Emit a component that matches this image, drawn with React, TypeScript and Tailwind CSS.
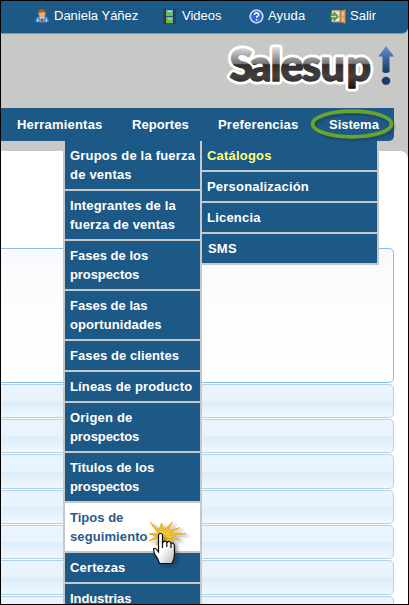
import React from "react";

type Line = { text: string; tracking: string };

const catalog: Line[][] = [
  [{ text: "Grupos de la fuerza", tracking: "tracking-[0.2px]" }, { text: "de ventas", tracking: "tracking-[0.2px]" }],
  [{ text: "Integrantes de la", tracking: "tracking-[0.15px]" }, { text: "fuerza de ventas", tracking: "tracking-[0.2px]" }],
  [{ text: "Fases de los", tracking: "tracking-[0.02px]" }, { text: "prospectos", tracking: "tracking-[-0.08px]" }],
  [{ text: "Fases de las", tracking: "tracking-[0.02px]" }, { text: "oportunidades", tracking: "tracking-[0.1px]" }],
  [{ text: "Fases de clientes", tracking: "tracking-[0.08px]" }],
  [{ text: "Líneas de producto", tracking: "tracking-[0.13px]" }],
  [{ text: "Origen de", tracking: "tracking-[0.2px]" }, { text: "prospectos", tracking: "tracking-[-0.08px]" }],
  [{ text: "Titulos de los", tracking: "tracking-[0.05px]" }, { text: "prospectos", tracking: "tracking-[-0.08px]" }],
  [{ text: "Tipos de", tracking: "tracking-[0.02px]" }, { text: "seguimiento", tracking: "tracking-[0.1px]" }],
  [{ text: "Certezas", tracking: "tracking-[0.15px]" }],
  [{ text: "Industrias", tracking: "tracking-[-0.08px]" }],
];

const system = ["Catálogos", "Personalización", "Licencia", "SMS"];

const rowHeights = ["h-[34px]", "h-[34px]", "h-[35px]", "h-[34px]", "h-[34px]", "h-[35px]", "h-[34px]"];

function UserIcon() {
  return (
    <svg className="shrink-0" width="14" height="14" viewBox="0 0 14 14">
      <path d="M.5 12.5Q.5 8 4 7.5H10Q13.500 8 13.500 12.500Q7 14.500 .5 12.500Z" fill="#639bd0" stroke="#397ab8" strokeWidth=".6" />
      <path d="M4.500 7.500L7 12L9.500 7.500Z" fill="#eee" />
      <path d="M6.400 8.500h1.200L8 12L7 13L6 12Z" fill="#c33a32" />
      <circle cx="7" cy="4.600" r="3.400" fill="#e9ad78" />
      <path d="M3 5Q2.500 .3 7 .2Q11.500 .3 11 5L9.800 3.600L6 3.200L4.200 4Z" fill="#a35f2c" />
      <path d="M2.500 10.500v2.500M11.500 10.500v2.500" stroke="#d3e5f4" />
    </svg>
  );
}

function FilmIcon() {
  return (
    <svg className="shrink-0" width="13" height="15" viewBox="0 0 13 15">
      <path d="M.5 0H3V15H.5ZM10 0h2.500v15H10Z" fill="#26302c" />
      <path d="M1.700 1v13M11.300 1v13" stroke="#66737b" strokeWidth=".8" strokeDasharray="1 1" />
      <path d="M3 1h7v6H3ZM3 8h7v6H3Z" fill="#5cb5e6" />
      <path d="M3 1L9 4L10 7H5L3 5ZM3 8L8 10L10 13V14H3Z" fill="#76b843" />
      <path d="M5 2.500h3M5 10h3" stroke="#d9ee8c" />
    </svg>
  );
}

function HelpIcon() {
  return (
    <svg className="shrink-0" width="15" height="15" viewBox="0 0 15 15">
      <circle cx="7.500" cy="7.500" r="7.200" fill="#b9cdf6" />
      <circle cx="7.500" cy="7.500" r="5.900" fill="#3467d5" stroke="#e6edff" strokeWidth=".8" />
      <path d="M5.300 5.800Q5.500 3.900 7.600 3.900Q9.800 4 9.700 5.700Q9.600 6.700 8.500 7.200Q7.600 7.600 7.600 8.800M7.600 10v1.500" fill="none" stroke="#fff" strokeWidth="1.500" />
    </svg>
  );
}

function ExitIcon() {
  return (
    <svg className="shrink-0" width="17" height="15" viewBox="0 0 17 15">
      <path d="M2 1.800h9v11H2Z" fill="#dfe6df" stroke="#c9b387" />
      <path d="M10 1.800L15.500 .5V14.500L10 13.200Z" fill="#d99a50" stroke="#a7652b" strokeWidth=".8" />
      <path d="M12 3l2-.4v4L12 7ZM12 8.500h2v4l-2-.4Z" fill="#efbd79" />
      <path d="M.5 5.800H4V3L8.500 7.500L4 12V9.300H.5Z" fill="#72a94c" stroke="#3f7530" strokeWidth=".8" />
      <path d="M1 7.500h5" stroke="#c9e3ac" />
    </svg>
  );
}

const logoX = "229.500 249.500 270.500 280.500 302 320.500 346.500";

function Logo() {
  return (
    <svg className="block" width="177" height="64" viewBox="220 40 177 64">
      <defs>
        <linearGradient id="metal" gradientUnits="userSpaceOnUse" x1="0" y1="49" x2="0" y2="93">
          <stop offset="0" stopColor="#d9d9d9" />
          <stop offset=".35" stopColor="#777" />
          <stop offset=".38" stopColor="#302c2c" />
          <stop offset=".65" stopColor="#454040" />
          <stop offset="1" stopColor="#050505" />
        </linearGradient>
        <linearGradient id="arrow" x1="0" y1="0" x2="0" y2="1">
          <stop offset="0" stopColor="#7190c5" />
          <stop offset=".5" stopColor="#34649b" />
          <stop offset="1" stopColor="#143a66" />
        </linearGradient>
      </defs>
      <g fontFamily="Lato, 'Open Sans', sans-serif" fontWeight="900" fontSize="43">
        <text x={logoX} y="81.500" fill="#fff" stroke="#fff" strokeWidth="7" strokeLinejoin="round">Salesup</text>
        <text x={logoX} y="81.500" fill="url(#metal)" stroke="url(#metal)" strokeWidth="1.400" strokeLinejoin="round">Salesup</text>
      </g>
      <path d="M386 47L394 57.500H389.500V73Q386 75 382.500 73V57.500H378.500Z" fill="url(#arrow)" />
      <ellipse cx="386" cy="81.800" rx="4.300" ry="4" fill="#163d68" />
    </svg>
  );
}

function ClickPointer() {
  return (
    <svg className="absolute left-[145px] top-[518px]" width="46" height="50" viewBox="146 519 46 50">
      <defs>
        <filter id="hand-shadow" x="-30%" y="-30%" width="180%" height="180%">
          <feDropShadow dx="3" dy="2" stdDeviation="1.500" floodColor="#222" floodOpacity=".35" />
        </filter>
        <linearGradient id="hand-fill" x1="0" y1="0" x2="1" y2="1">
          <stop offset=".5" stopColor="#fff" />
          <stop offset="1" stopColor="#b6b6b6" />
        </linearGradient>
      </defs>
      <g filter="url(#hand-shadow)">
        <path d="M150 522L159 530L161.500 523L164 530L172.500 522L168 531L180 527.500L170 533L186 533.500L171 536L180 540L169 538L174 543L166 541L156 545L159 538L149 541L157 536L149 534L158 533Z" fill="#f0c02b" stroke="#e5ae1a" strokeWidth=".9" />
      </g>
      <path d="M160 530L165 534L170 530L166 536L172 537L162 537Z" fill="#f7d75d" />
      <path filter="url(#hand-shadow)" d="M158.500 535Q160.500 531.500 162.500 535V543Q165 539.500 167 542.500Q169.500 540 171 543.500Q174 542 174.500 546V554Q174.500 559 172 563.500H159.500Q158 558 154.500 554L153.500 549Q155 547.500 157 550L158.500 552Z" fill="url(#hand-fill)" stroke="#111" strokeWidth="1.200" />
      <path d="M162.500 541v7M166.800 542v5M171 544v4" stroke="#111" strokeWidth="1.200" />
    </svg>
  );
}

export default function App() {
  return (
    <div className="relative flex h-[605px] w-[409px] flex-col overflow-hidden border border-black bg-[#c8c8c6] font-['Liberation_Sans',Arial,sans-serif] text-[13px]">
      <header className="h-[33px] w-[407px] shrink-0 rounded-br-[6px] border-b border-[#8198aa] bg-[#1d5987] text-white">
        <nav className="flex h-[30px] items-center pl-[34px] text-[13px]">
          <a className="flex w-[128px] items-center gap-[5px]"><UserIcon /><span className="whitespace-nowrap">Daniela Yáñez</span></a>
          <a className="flex w-[86px] items-center gap-[6px]"><FilmIcon /><span>Videos</span></a>
          <a className="flex w-[81px] items-center gap-[4px]"><HelpIcon /><span className="tracking-[0.15px]">Ayuda</span></a>
          <a className="flex items-center gap-[3px]"><ExitIcon /><span>Salir</span></a>
        </nav>
      </header>

      <div className="flex h-[74px] shrink-0 pl-[219px] pt-[5px]"><Logo /></div>

      <nav className="flex h-[33px] w-[393px] shrink-0 items-center rounded-br-[5px] bg-[#1d5987] pl-[16px] font-bold tracking-[0.15px] text-white">
        <a className="w-[115px] tracking-[0.2px]">Herramientas</a>
        <a className="w-[86px] tracking-[0.05px]">Reportes</a>
        <a className="w-[111px] tracking-[0.2px]">Preferencias</a>
        <a className="tracking-[0px]">Sistema</a>
      </nav>

      <main className="mt-[10px] flex min-h-0 flex-1 flex-col rounded-tr-[8px] bg-white pt-[97px]">
        <section className="mb-px h-[135px] w-[393px] shrink-0 rounded-r-[5px] border border-l-0 border-[#8bbce5] bg-linear-to-b from-[#f7f9fc] via-[#fcfefe] to-white" />
        {rowHeights.map((height, i) => (
          <section key={i} className={`${height} mb-px w-[393px] shrink-0 rounded-r-[5px] border border-l-0 border-[#b3d2ea] bg-[linear-gradient(#eaf4fd_0%,#e8f3fd_48%,#dcedfb_54%,#e5f2fc_75%,#f0f7fd_100%)]`} />
        ))}
      </main>

      <div className="absolute left-[62px] top-[140px] w-[139px] border-x-2 border-[#c8c8c8] font-bold text-white">
        {catalog.map((lines) => (
          <div key={lines[0].text} className={`border-b-2 border-[#c8c8c8] py-[5px] pl-[5px] leading-[19px] ${lines[0].text === "Tipos de" ? "bg-white text-[#285c87]" : "bg-[#1d5987]"}`}>
            {lines.map((line) => <div key={line.text} className={`whitespace-nowrap ${line.tracking}`}>{line.text}</div>)}
          </div>
        ))}
      </div>

      <div className="absolute left-[201px] top-[140px] w-[177px] border-r-2 border-[#c8c8c8] font-bold tracking-[0.2px] text-white">
        {system.map((label, i) => (
          <div key={label} className={`h-[31px] border-b-2 border-[#c8c8c8] bg-[#1d5987] pt-[5px] leading-[19px] ${label === "SMS" ? "pl-[6px]" : "pl-[5px]"} ${i === 0 ? "text-[#ffff80]" : ""}`}>{label}</div>
        ))}
      </div>

      <svg className="absolute left-[306px] top-[104px]" width="96" height="42" viewBox="307 105 96 42">
        <ellipse cx="354" cy="126.500" rx="39.500" ry="12.800" fill="none" stroke="#222" strokeOpacity=".25" strokeWidth="4" />
        <ellipse cx="352" cy="124" rx="39.500" ry="12.800" fill="none" stroke="#68a52a" strokeWidth="3.800" />
      </svg>
      <ClickPointer />
    </div>
  );
}
